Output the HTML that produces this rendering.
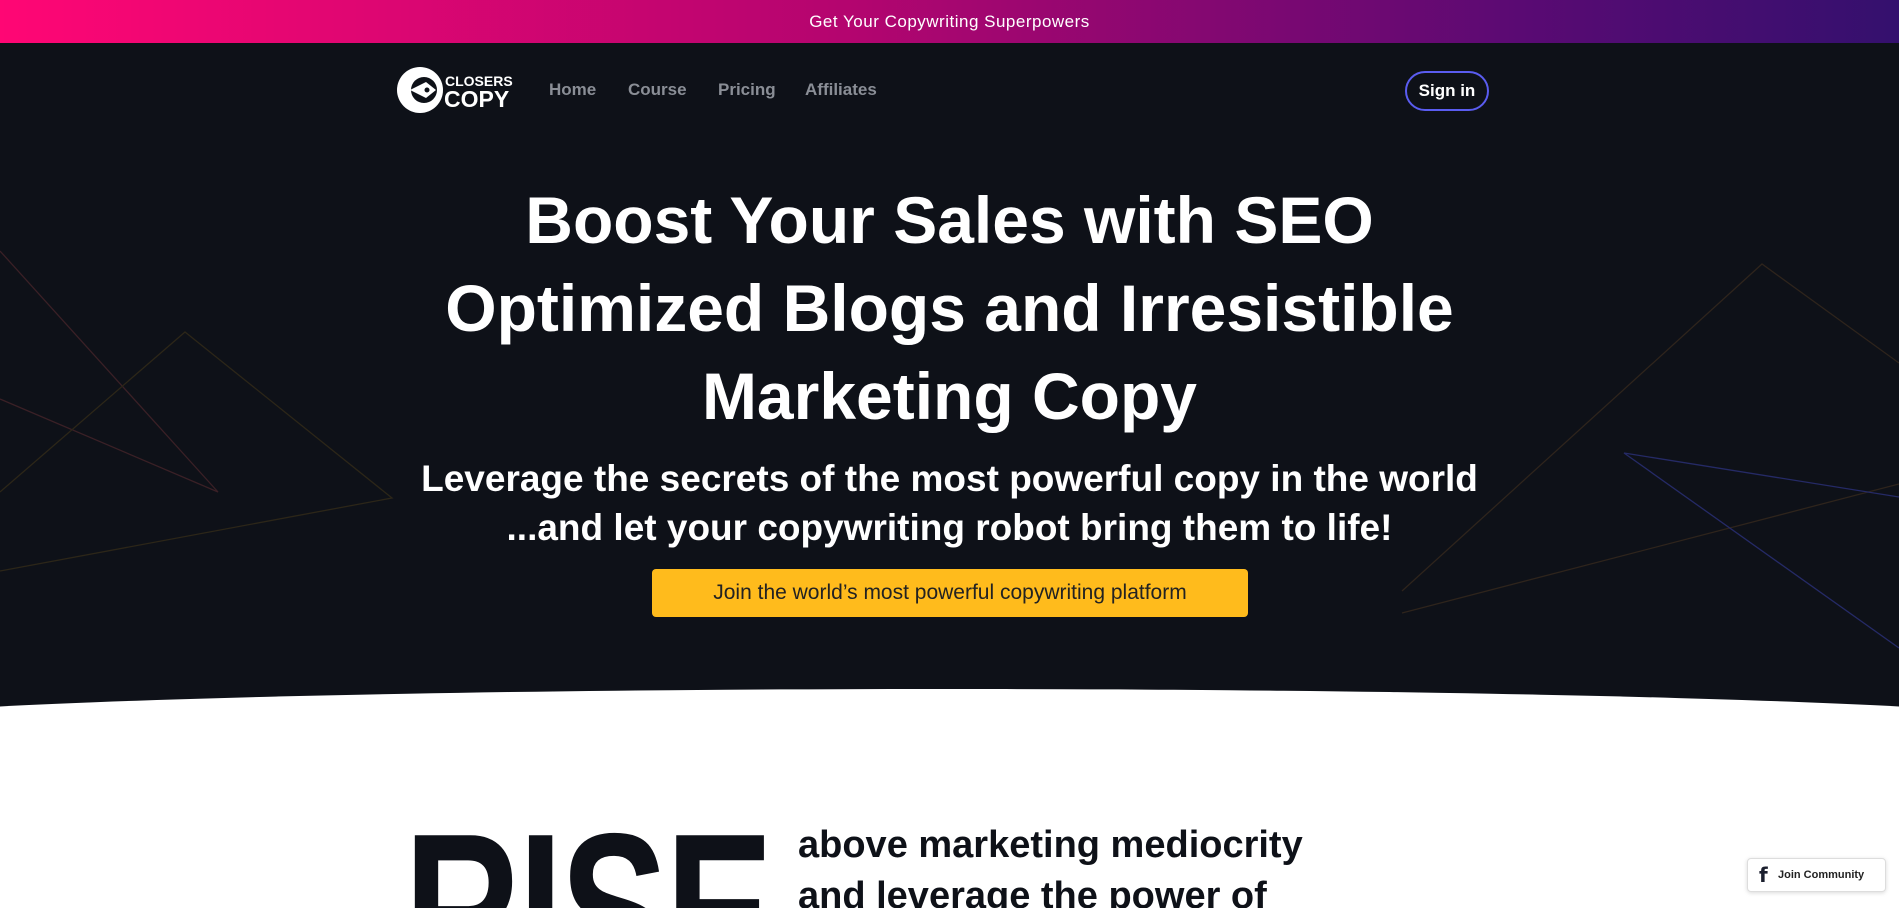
<!DOCTYPE html>
<html><head><meta charset="utf-8"><style>
*{margin:0;padding:0;box-sizing:border-box}
html,body{width:1899px;height:908px;overflow:hidden;background:#fff;font-family:"Liberation Sans",sans-serif}
.wrap{position:relative;width:1899px;height:908px;overflow:hidden}
.top{position:absolute;left:0;top:0;width:1899px;height:43px;background:linear-gradient(90deg,#ff0674,#b3056f 45%,#5a0a73 80%,#34106e);color:#fff;font-size:17px;text-align:center;line-height:43px;letter-spacing:.5px}
.hero{position:absolute;left:0;top:43px;width:1899px;height:680px;background:#0e1118}
.curve{position:absolute;left:-200px;top:689px;width:2299px;height:219px;background:#fff;border-radius:50% 50% 0 0/40px 40px 0 0}
svg.bg{position:absolute;left:0;top:0}
.nav a{position:absolute;top:80px;color:#8a8e96;font-size:17px;font-weight:bold;text-decoration:none}
.sign{position:absolute;left:1405px;top:71px;width:84px;height:40px;border-radius:20px;border:2px solid #5a5cf0;color:#fff;font-weight:bold;font-size:17px;text-align:center;line-height:36px}
h1{position:absolute;left:0;width:1899px;top:176px;text-align:center;color:#fff;font-size:66px;line-height:88px;font-weight:bold}
.sub{position:absolute;left:0;width:1899px;top:454px;text-align:center;color:#fff;font-size:37px;line-height:49px;font-weight:bold}
.btn{position:absolute;left:652px;top:569px;width:596px;height:48px;background:#ffbb1c;border-radius:4px;color:#222;font-size:21px;text-align:center;line-height:48px}
.rise{position:absolute;left:404px;top:800px;font-size:225px;font-weight:bold;color:#0e1118;transform:scaleX(.72);transform-origin:left top;line-height:1;letter-spacing:-4px}
.above{position:absolute;left:798px;top:820px;font-size:38px;font-weight:bold;color:#0e1118;line-height:51px}
.jc{position:absolute;left:1747px;top:858px;width:139px;height:34px;border:1px solid #ddd;border-radius:4px;background:#fff;box-shadow:0 1px 4px rgba(0,0,0,.15);font-size:11px;font-weight:bold;color:#222;line-height:32px;padding-left:30px}
.jc b{position:absolute;left:11px;top:0;font-size:20px;font-family:"DejaVu Sans",sans-serif;color:#1b1f2e}
</style></head><body><div class="wrap">
<div class="top">Get Your Copywriting Superpowers</div>
<div class="hero"></div>
<svg class="bg" width="1899" height="908">
<g fill="none" stroke-width="1.3">
<polyline points="0,251 218,492 0,399" stroke="#3a2026"/>
<polyline points="0,492 185,332 392,498 0,571" stroke="#2c2618"/>
<polyline points="1402,591 1762,264 1899,363" stroke="#2e241c"/>
<line x1="1402" y1="613" x2="1899" y2="484" stroke="#2e241c"/>
<polyline points="1899,497 1624,453 1899,648" stroke="#252a66"/>
</g>
<circle cx="420" cy="90" r="23" fill="#fff"/>
<circle cx="424" cy="90" r="13" fill="#0e1118"/>
<path d="M410 90 L426 82 L436 90 L426 98 Z" fill="#fff"/>
<circle cx="427" cy="90" r="2.5" fill="#0e1118"/>
<text x="445" y="86" fill="#fff" font-size="14" font-weight="bold" font-family="Liberation Sans">CLOSERS</text>
<text x="444" y="107" fill="#fff" font-size="23" font-weight="bold" font-family="Liberation Sans">COPY</text>
</svg>
<div class="nav"><a style="left:549px">Home</a><a style="left:628px">Course</a><a style="left:718px">Pricing</a><a style="left:805px">Affiliates</a></div>
<div class="sign">Sign in</div>
<h1>Boost Your Sales with SEO<br>Optimized Blogs and Irresistible<br>Marketing Copy</h1>
<div class="sub">Leverage the secrets of the most powerful copy in the world<br>...and let your copywriting robot bring them to life!</div>
<div class="btn">Join the world’s most powerful copywriting platform</div>
<div class="curve"></div>
<div class="rise">RISE</div>
<div class="above">above marketing mediocrity<br>and leverage the power of</div>
<div class="jc"><b>f</b>Join Community</div>
</div></body></html>
